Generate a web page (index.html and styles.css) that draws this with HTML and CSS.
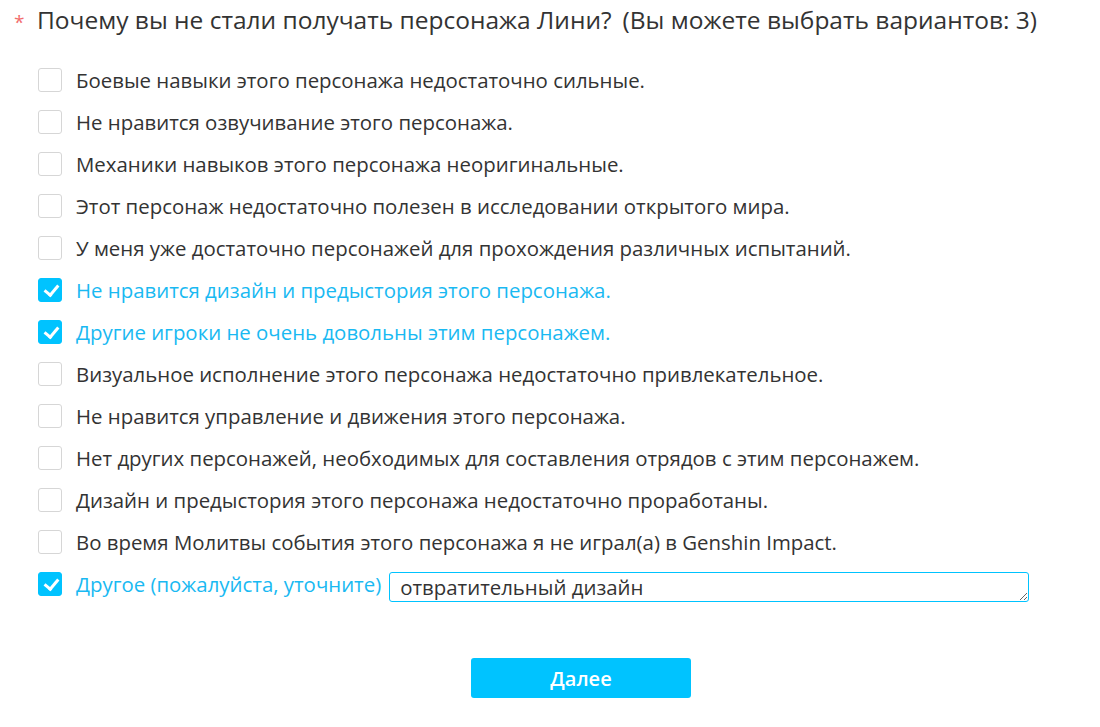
FILE: index.html
```html
<!DOCTYPE html>
<html lang="ru">
<head>
    <meta charset="UTF-8">
    <title>Опрос</title>
    <link rel="stylesheet" href="styles.css">
</head>
<body>
<div class="question">
    <div class="title">
        <span class="star">*</span>
        <span class="text">Почему вы не стали получать персонажа Лини?</span>
        <span class="hint">(Вы можете выбрать вариантов: 3)</span>
    </div>
    <ul class="options">
        <li><span class="box"></span><span>Боевые навыки этого персонажа недостаточно сильные.</span></li>
        <li><span class="box"></span><span>Не нравится озвучивание этого персонажа.</span></li>
        <li><span class="box"></span><span>Механики навыков этого персонажа неоригинальные.</span></li>
        <li><span class="box"></span><span>Этот персонаж недостаточно полезен в исследовании открытого мира.</span></li>
        <li><span class="box"></span><span>У меня уже достаточно персонажей для прохождения различных испытаний.</span></li>
        <li class="checked"><span class="box"></span><span>Не нравится дизайн и предыстория этого персонажа.</span></li>
        <li class="checked"><span class="box"></span><span>Другие игроки не очень довольны этим персонажем.</span></li>
        <li><span class="box"></span><span>Визуальное исполнение этого персонажа недостаточно привлекательное.</span></li>
        <li><span class="box"></span><span>Не нравится управление и движения этого персонажа.</span></li>
        <li><span class="box"></span><span>Нет других персонажей, необходимых для составления отрядов с этим персонажем.</span></li>
        <li><span class="box"></span><span>Дизайн и предыстория этого персонажа недостаточно проработаны.</span></li>
        <li><span class="box"></span><span>Во время Молитвы события этого персонажа я не играл(а) в Genshin Impact.</span></li>
        <li class="checked other"><span class="box"></span><span>Другое (пожалуйста, уточните)</span>
            <textarea class="other-input" rows="1">отвратительный дизайн</textarea>
        </li>
    </ul>
</div>
<div class="footer">
    <button class="next">Далее</button>
</div>
</body>
</html>
```

FILE: styles.css
```css
* {
    margin: 0;
    padding: 0;
    box-sizing: border-box;
}

body {
    font-family: "Open Sans", "Noto Sans", sans-serif;
    color: #333;
    background: #fff;
}

ul {
    list-style: none;
}

.question {
    padding: 3px 0 0 14px;
}

.title {
    display: flex;
    align-items: baseline;
    font-size: 24.5px;
    line-height: 34px;
    color: #333;
}

.title .star {
    color: #f26d6d;
    font-size: 19px;
    width: 23px;
}

.title .hint {
    margin-left: 11px;
}

.options {
    padding: 20px 0 0 24px;
}

.options li {
    display: flex;
    align-items: center;
    height: 42px;
    font-size: 20.4px;
    color: #333;
}

.options .box {
    flex: none;
    width: 24px;
    height: 24px;
    border: 1px solid #d6d6d6;
    border-radius: 3px;
    margin-right: 14px;
    position: relative;
}

.options li.checked {
    color: #19b9f2;
}

.options li.checked .box {
    background: #00c3ff;
    border-color: #00c3ff;
}

.options li.checked .box::after {
    content: "";
    position: absolute;
    left: 8px;
    top: 3px;
    width: 6px;
    height: 11px;
    border: solid #fff;
    border-width: 0 3px 3px 0;
    transform: rotate(40deg);
}

.other-input {
    width: 640px;
    height: 30px;
    margin: 6px 0 0 8px;
    padding: 1px 10px 0;
    border: 1px solid #00c3ff;
    border-radius: 3px;
    font-family: inherit;
    font-size: 20.4px;
    line-height: 27px;
    color: #333;
    resize: vertical;
    overflow: hidden;
    outline: none;
}

.footer {
    display: flex;
    justify-content: center;
    padding: 53px 0 0 62px;
}

.next {
    width: 220px;
    height: 40px;
    border: none;
    border-radius: 3px;
    background: #00c3ff;
    color: #fff;
    font-family: inherit;
    font-size: 20px;
    font-weight: 600;
    cursor: pointer;
}
```
